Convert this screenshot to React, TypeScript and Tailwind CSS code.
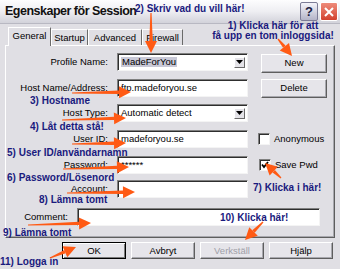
import React from 'react';

const ORANGE = '#ff5a14';

const arrows = [
  [151, 13, 151, 53],
  [278, 39, 292, 56],
  [72, 93, 131, 92],
  [62, 120, 126, 118],
  [72, 144, 126, 143],
  [63, 169, 129, 167],
  [67, 193, 135, 192],
  [28, 225, 91, 223],
  [50, 258, 76, 247],
  [263, 222, 245, 240],
  [281, 178, 265, 163],
];

function Arrow({ x1, y1, x2, y2 }: { x1: number; y1: number; x2: number; y2: number }) {
  const a = Math.atan2(y2 - y1, x2 - x1);
  const L = 12;
  const bx = x2 - L * Math.cos(a);
  const by = y2 - L * Math.sin(a);
  const nx = -Math.sin(a);
  const ny = Math.cos(a);
  const shaft = `${x1 + nx * 0.6},${y1 + ny * 0.6} ${bx + nx * 1.7},${by + ny * 1.7} ${bx - nx * 1.7},${by - ny * 1.7} ${x1 - nx * 0.6},${y1 - ny * 0.6}`;
  const head = `${x2},${y2} ${bx + nx * 6},${by + ny * 6} ${bx - nx * 6},${by - ny * 6}`;
  return (
    <g>
      <polygon points={shaft} fill={ORANGE} />
      <polygon points={head} fill={ORANGE} />
    </g>
  );
}

const notes: { text: string; className: string }[] = [
  { text: '2) Skriv vad du vill här!', className: 'left-[135px] top-[3px]' },
  { text: '3) Hostname', className: 'left-[30px] top-[95px]' },
  { text: '4) Låt detta stå!', className: 'left-[30px] top-[121px]' },
  { text: '5) User ID/användarnamn', className: 'left-[7px] top-[147px]' },
  { text: '6) Password/Lösenord', className: 'left-[7px] top-[172px]' },
  { text: '7) Klicka i här!', className: 'left-[253px] top-[182px]' },
  { text: '8) Lämna tomt', className: 'left-[39px] top-[194px]' },
  { text: '9) Lämna tomt', className: 'left-[3px] top-[227px]' },
  { text: '10) Klicka här!', className: 'left-[220px] top-[212px]' },
  { text: '11) Logga in', className: 'left-[0px] top-[256px]' },
];

function Field({ className, children }: { className: string; children?: React.ReactNode }) {
  return (
    <div className={`h-[18px] flex items-center bg-white border border-t-[#808080] border-l-[#808080] border-r-[#f4f4f4] border-b-[#f4f4f4] shadow-[inset_1px_1px_0_#2e2e2e] pl-[3px] pr-[2px] ${className}`}>
      {children}
    </div>
  );
}

function DropArrow() {
  return (
    <div className="ml-auto w-[11px] h-[11px] flex items-center justify-center bg-[#e4e3e8] border border-t-white border-l-white border-r-[#6a6a6a] border-b-[#6a6a6a]">
      <svg width="7" height="4" viewBox="0 0 7 4">
        <polygon points="0,0 7,0 3.5,4" fill="#000" />
      </svg>
    </div>
  );
}

function Button({ label, className, disabled, dflt }: { label: string; className: string; disabled?: boolean; dflt?: boolean }) {
  return (
    <div className={`flex items-center justify-center bg-[#e6e5ea] border ${dflt ? 'border-black shadow-[inset_1px_1px_0_#fff,inset_-1px_-1px_0_#7a7a7a]' : 'border-t-white border-l-white border-r-[#5e5e5e] border-b-[#5e5e5e] shadow-[inset_-1px_-1px_0_#a8a8ae]'} ${disabled ? 'text-[#a0a0a8]' : 'text-black'} ${className}`}>
      {label}
    </div>
  );
}

function Check({ checked }: { checked?: boolean }) {
  return (
    <div className="w-[12px] h-[12px] bg-white border border-t-[#808080] border-l-[#808080] border-r-[#f4f4f4] border-b-[#f4f4f4] shadow-[inset_1px_1px_0_#2e2e2e] flex items-center justify-center">
      {checked && (
        <svg width="8" height="8" viewBox="0 0 8 8">
          <polyline points="1,3.5 3,6 7,1" fill="none" stroke="#000" strokeWidth="1.8" />
        </svg>
      )}
    </div>
  );
}

function Label({ text, className }: { text: string; className: string }) {
  return <div className={`text-right shrink-0 ${className}`}>{text}</div>;
}

export default function App() {
  return (
    <div className="relative w-[340px] h-[269px] overflow-hidden bg-[#e0dfe4] font-['Liberation_Sans',Arial,sans-serif] text-[9.5px] text-black leading-none">
      {/* title bar */}
      <div className="h-[24px] flex items-center bg-gradient-to-b from-[#fdfdfe] via-[#eeeef2] to-[#d2d2da] border-b border-[#b8b8c2]">
        <span className="ml-[5px] text-[12.5px] font-bold tracking-[-0.5px] text-[#111]">Egenskaper för Session</span>
        <div className="ml-auto mr-[2px] flex gap-[2px]">
          <div className="w-[18px] h-[19px] flex items-center justify-center rounded-[2px] border border-[#7c7c96] bg-gradient-to-b from-[#f4f4fa] to-[#b4b4c8] text-[13px] font-bold text-[#1c1c40]">?</div>
          <div className="w-[18px] h-[19px] flex items-center justify-center rounded-[2px] border border-white bg-gradient-to-b from-[#ee8a7a] to-[#d2412e]">
            <svg width="10" height="10" viewBox="0 0 10 10">
              <path d="M1 1 L9 9 M9 1 L1 9" stroke="#fff" strokeWidth="2" />
            </svg>
          </div>
        </div>
      </div>

      <div className="px-[5px]">
        {/* tabs */}
        <div className="flex items-end h-[21px] pl-[3px]">
          <div className="relative z-10 h-[19px] w-[43px] -mb-px flex items-center justify-center bg-[#e0dfe4] border border-b-0 border-t-white border-l-white border-r-[#6a6a6a] pb-[2px]">General</div>
          <div className="h-[16px] w-[37px] flex items-center justify-center border border-b-0 border-t-white border-l-white border-r-[#6a6a6a]">Startup</div>
          <div className="h-[16px] w-[54px] flex items-center justify-center border border-b-0 border-t-white border-l-white border-r-[#6a6a6a]">Advanced</div>
          <div className="h-[16px] w-[41px] flex items-center justify-center border border-b-0 border-t-white border-l-white border-r-[#6a6a6a]">Firewall</div>
        </div>

        {/* panel */}
        <div className="h-[193px] border border-t-white border-l-white border-r-[#5e5e5e] border-b-[#5e5e5e] shadow-[inset_-1px_-1px_0_#a8a8ae] pt-[7px]">
          <div className="flex items-center h-[18px]">
            <Label text="Profile Name:" className="w-[102px]" />
            <Field className="ml-[9px] w-[131px]">
              <span className="bg-[#c8c8d6] px-px">MadeForYou</span>
              <DropArrow />
            </Field>
            <Button label="New" className="ml-[13px] w-[66px] h-[19px] mt-[2px]" />
          </div>
          <div className="flex items-center h-[18px] mt-[8px]">
            <Label text="Host Name/Address:" className="w-[102px]" />
            <Field className="ml-[9px] w-[131px]">ftp.madeforyou.se</Field>
            <Button label="Delete" className="ml-[13px] w-[66px] h-[19px]" />
          </div>
          <div className="flex items-center h-[18px] mt-[7px]">
            <Label text="Host Type:" className="w-[102px]" />
            <Field className="ml-[9px] w-[131px]">
              <span>Automatic detect</span>
              <DropArrow />
            </Field>
          </div>
          <div className="flex items-center h-[18px] mt-[8px]">
            <Label text="User ID:" className="w-[102px]" />
            <Field className="ml-[9px] w-[131px]">madeforyou.se</Field>
            <div className="ml-[10px]"><Check /></div>
            <span className="ml-[4px]">Anonymous</span>
          </div>
          <div className="flex items-center h-[18px] mt-[8px]">
            <Label text="Password:" className="w-[102px]" />
            <Field className="ml-[9px] w-[131px]">******</Field>
            <div className="ml-[11px]"><Check checked /></div>
            <span className="ml-[4px]">Save Pwd</span>
          </div>
          <div className="flex items-center h-[18px] mt-[6px]">
            <Label text="Account:" className="w-[102px]" />
            <Field className="ml-[9px] w-[131px]" />
          </div>
          <div className="flex items-center h-[18px] mt-[10px]">
            <Label text="Comment:" className="w-[62px]" />
            <Field className="ml-[9px] w-[243px]" />
          </div>
        </div>

        {/* bottom buttons */}
        <div className="flex justify-end gap-[5px] pr-[2px] mt-[4px]">
          <Button label="OK" dflt className="w-[64px] h-[17px]" />
          <Button label="Avbryt" className="w-[64px] h-[17px]" />
          <Button label="Verkställ" disabled className="w-[64px] h-[17px]" />
          <Button label="Hjälp" className="w-[64px] h-[17px]" />
        </div>
      </div>

      {/* annotations */}
      <div className="absolute inset-0 pointer-events-none">
        {notes.map((n) => (
          <span key={n.text} className={`absolute whitespace-nowrap text-[10px] leading-[11px] font-bold text-[#1a1a7e] ${n.className}`}>
            {n.text}
          </span>
        ))}
        <div className="absolute left-[205px] top-[21px] w-[136px] text-center text-[10px] leading-[10px] font-bold text-[#1a1a7e]">
          <div>1) Klicka här för att</div>
          <div>få upp en tom inloggsida!</div>
        </div>
        <svg className="absolute inset-0" width="340" height="269">
          {arrows.map(([x1, y1, x2, y2], i) => (
            <Arrow key={i} x1={x1} y1={y1} x2={x2} y2={y2} />
          ))}
        </svg>
      </div>
    </div>
  );
}
